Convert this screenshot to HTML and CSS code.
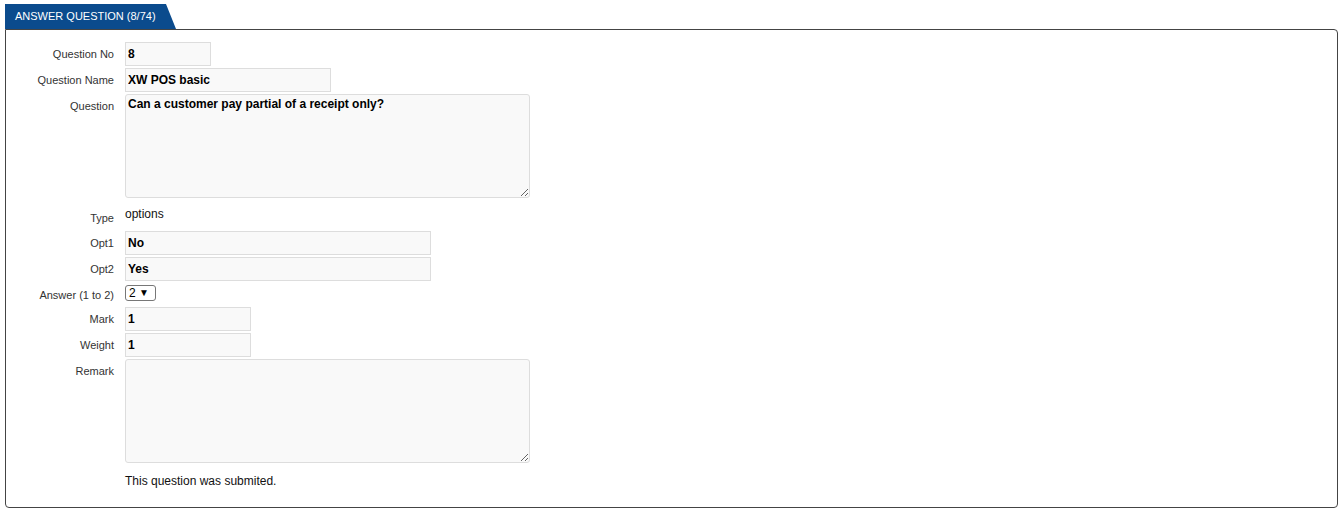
FILE: index.html
```html
<!DOCTYPE html>
<html lang="en">
<head>
    <meta charset="UTF-8">
    <title>Answer Question</title>
    <link rel="stylesheet" href="styles.css">
</head>
<body>

    <div class="tab">ANSWER QUESTION (8/74)</div>

    <div class="panel">
        <div class="form">

            <label class="lbl">Question No</label>
            <input class="field short" type="text" value="8" readonly>

            <label class="lbl">Question Name</label>
            <input class="field medium" type="text" value="XW POS basic" readonly>

            <label class="lbl">Question</label>
            <textarea class="field area" readonly>Can a customer pay partial of a receipt only?</textarea>

            <label class="lbl lbl-type">Type</label>
            <div class="plain type-value">options</div>

            <label class="lbl">Opt1</label>
            <input class="field wide" type="text" value="No" readonly>

            <label class="lbl">Opt2</label>
            <input class="field wide" type="text" value="Yes" readonly>

            <label class="lbl lbl-answer">Answer (1 to 2)</label>
            <div class="answer-cell">
                <div class="select-box">2 <span class="arrow">▼</span></div>
            </div>

            <label class="lbl">Mark</label>
            <input class="field mid" type="text" value="1" readonly>

            <label class="lbl">Weight</label>
            <input class="field mid" type="text" value="1" readonly>

            <label class="lbl">Remark</label>
            <textarea class="field area" readonly></textarea>

            <div></div>
            <div class="plain status">This question was submited.</div>
        </div>
    </div>

</body>
</html>
```

FILE: styles.css
```css
body {
    font-family: Arial, "Liberation Sans", sans-serif;
    background-color: #fff;
    color: #333;
    margin: 0;
    padding: 4px 6px 0 5px;
}

/* onglet bleu */
.tab {
    width: 171px;
    height: 25px;
    box-sizing: border-box;
    padding-left: 10px;
    line-height: 25px;
    background-color: #0b4b8d;
    color: #fff;
    font-size: 11px;
    clip-path: polygon(0 0, 161px 0, 171px 100%, 0 100%);
}

.panel {
    border: 1px solid #444;
    border-radius: 0 4px 4px 4px;
    height: 479px;
    box-sizing: border-box;
    padding-top: 12px;
}

.form {
    display: grid;
    grid-template-columns: 108px auto;
    column-gap: 11px;
    row-gap: 2px;
    justify-items: start;
}

.lbl {
    justify-self: end;
    font-size: 11px;
    color: #333;
    padding-top: 6px;
    line-height: 13px;
}

.field {
    box-sizing: border-box;
    height: 24px;
    margin: 0;
    padding: 0 2px;
    border: 1px solid #ddd;
    background-color: #f9f9f9;
    font-family: Arial, "Liberation Sans", sans-serif;
    font-size: 12px;
    font-weight: bold;
    color: #000;
    outline: none;
}

.short { width: 86px; }
.medium { width: 206px; }
.wide { width: 306px; }
.mid { width: 126px; }

.area {
    width: 405px;
    height: 104px;
    padding: 2px;
    border-radius: 3px;
    resize: vertical;
    line-height: 14px;
}

.plain {
    font-size: 12px;
    color: #111;
    line-height: 14px;
}

.type-value {
    padding-top: 7px;
    height: 29px;
    box-sizing: border-box;
}

.lbl-type {
    padding-top: 12px;
}

.answer-cell {
    height: 22px;
    padding-top: 2px;
    box-sizing: border-box;
}

.lbl-answer {
    padding-top: 6px;
}

.select-box {
    box-sizing: border-box;
    width: 31px;
    height: 16px;
    border: 1px solid #777;
    border-radius: 3px;
    font-size: 12px;
    line-height: 14px;
    color: #000;
    padding-left: 3px;
}

.arrow {
    font-size: 10px;
    vertical-align: 1px;
}

.status {
    padding-top: 9px;
}
```
